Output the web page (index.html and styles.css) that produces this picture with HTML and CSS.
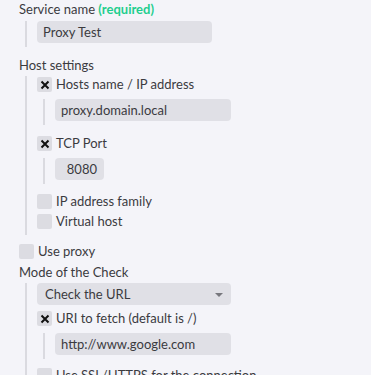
FILE: index.html
```html
<!DOCTYPE html>
<html lang="en">
<head>
  <meta charset="UTF-8" />
  <title>Service rule</title>
  <link rel="stylesheet" href="styles.css">
</head>
<body>
  <div class="form">
    <div class="title">Service name <span class="req">(required)</span></div>
    <div class="group g-name">
      <div class="field w-wide">Proxy Test</div>
    </div>

    <div class="title t-host">Host settings</div>
    <div class="group g-host">
      <div class="check">
        <span class="box on"><svg viewBox="0 0 10 10"><path d="M1.5 1.5 L8.5 8.5 M8.5 1.5 L1.5 8.5"/></svg></span>
        Hosts name / IP address
      </div>
      <div class="group sub">
        <div class="field w-full">proxy.domain.local</div>
      </div>

      <div class="check c-tcp">
        <span class="box on"><svg viewBox="0 0 10 10"><path d="M1.5 1.5 L8.5 8.5 M8.5 1.5 L1.5 8.5"/></svg></span>
        TCP Port
      </div>
      <div class="group sub">
        <div class="field w-port">8080</div>
      </div>

      <div class="check c-ip"><span class="box"></span>IP address family</div>
      <div class="check c-vh"><span class="box"></span>Virtual host</div>
    </div>

    <div class="check c-proxy"><span class="box"></span>Use proxy</div>
    <div class="title t-mode">Mode of the Check</div>
    <div class="group g-mode">
      <div class="field select">Check the URL<span class="arrow"></span></div>
      <div class="check c-uri">
        <span class="box on"><svg viewBox="0 0 10 10"><path d="M1.5 1.5 L8.5 8.5 M8.5 1.5 L1.5 8.5"/></svg></span>
        URI to fetch (default is /)
      </div>
      <div class="group sub">
        <div class="field w-full">http://www.google.com</div>
      </div>
      <div class="check c-ssl"><span class="box"></span>Use SSL/HTTPS for the connection</div>
    </div>
  </div>
</body>
</html>
```

FILE: styles.css
```css
body {
  margin: 0;
  background: #f4f4f9;
  font-family: 'Lato', sans-serif;
  font-size: 13px;
  color: #3b3b3f;
  overflow: hidden;
  height: 375px;
}

.form {
  padding-left: 19px;
}

.title {
  line-height: 18px;
}

.req {
  color: #1fce8e;
  font-weight: bold;
}

.group {
  margin-left: 6px;
  border-left: 2px solid #dadae0;
  padding-left: 10px;
}

.group.sub {
  margin-top: 7px;
  padding-bottom: 4px;
}

.g-name {
  margin-top: 3px;
  padding-bottom: 4px;
}

.t-host {
  margin-top: 9px;
}

.g-host {
  margin-top: 2px;
  padding-top: 1px;
  padding-bottom: 6px;
}

.field {
  height: 22px;
  line-height: 22px;
  background: #e0e0e6;
  border-radius: 4px;
  padding: 0 6px;
  box-sizing: border-box;
}

.w-wide {
  width: 175px;
}

.w-full {
  width: 176px;
}

.w-port {
  width: 49px;
  text-align: right;
  padding-right: 7px;
}

.check {
  display: flex;
  align-items: center;
  gap: 4px;
  height: 15px;
  line-height: 15px;
}

.box {
  flex: none;
  width: 15px;
  height: 15px;
  background: #dcdce2;
  border-radius: 2px;
  display: flex;
  align-items: center;
  justify-content: center;
}

.box svg {
  width: 10px;
  height: 10px;
  stroke: #111;
  stroke-width: 2;
  fill: none;
}

.c-tcp {
  margin-top: 11px;
}

.c-ip {
  margin-top: 10px;
}

.c-vh {
  margin-top: 5px;
}

.c-proxy {
  margin-top: 9px;
}

.t-mode {
  margin-top: 4px;
}

.g-mode {
  margin-top: 2px;
  padding-bottom: 4px;
}

.select {
  width: 194px;
  padding-left: 8px;
  position: relative;
}

.arrow {
  position: absolute;
  right: 8px;
  top: 10px;
  border-left: 4px solid transparent;
  border-right: 4px solid transparent;
  border-top: 4px solid #77777d;
}

.c-uri {
  margin-top: 6px;
}

.c-ssl {
  margin-top: 9px;
}
```
